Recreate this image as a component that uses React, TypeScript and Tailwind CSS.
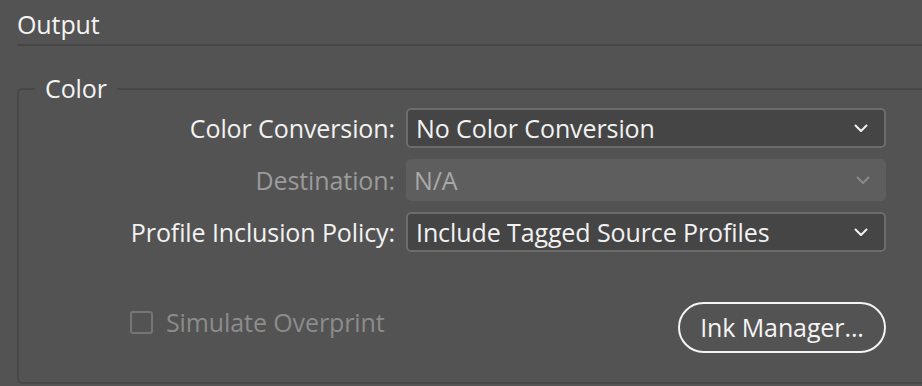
import { ReactNode } from "react";

const font = { fontFamily: '"Open Sans", "Noto Sans", sans-serif' };

function Chevron({ dim }: { dim?: boolean }) {
  return (
    <svg width="14" height="9" viewBox="0 0 14 9" className="shrink-0">
      <path
        d="M1.5 1.5 L7 7 L12.5 1.5"
        fill="none"
        stroke={dim ? "#8a8a8a" : "#f2f2f2"}
        strokeWidth="2"
        strokeLinecap="round"
        strokeLinejoin="round"
      />
    </svg>
  );
}

function Row({
  label,
  value,
  disabled,
}: {
  label: string;
  value: ReactNode;
  disabled?: boolean;
}) {
  return (
    <>
      <div
        className={`text-right pr-[11px] ${disabled ? "text-[#9b9b9b]" : "text-[#f2f2f2]"}`}
      >
        {label}
      </div>
      <div
        className={`h-[40px] rounded-[5px] flex items-center justify-between pl-[8px] pr-[16px] ${
          disabled
            ? "bg-[#5e5e5e] text-[#a8a8a8] h-[42px]"
            : "bg-[#454545] border-2 border-[#6c6c6c] text-[#f2f2f2] pl-[6px]"
        }`}
      >
        <span>{value}</span>
        <Chevron dim={disabled} />
      </div>
    </>
  );
}

export default function App() {
  return (
    <div
      style={font}
      className="w-[922px] h-[386px] overflow-hidden bg-[#535353] text-[25px] font-medium leading-none tracking-[-0.1px]"
    >
      {/* header */}
      <div className="ml-[17px] h-[46px] border-b-2 border-[#474747] flex items-center pt-[4px] text-[#f4f4f4]">
        Output
      </div>

      {/* color group */}
      <fieldset className="ml-[17px] -mr-[10px] mt-[30px] h-[308px] border-2 border-[#474747] rounded-[5px] pl-[0px] pr-[46px]">
        <legend className="ml-[16px] px-[10px] text-[#f4f4f4]">Color</legend>

        <div className="grid grid-cols-[387px_480px] gap-y-[11px] items-center mt-[7px]">
          <Row label="Color Conversion:" value="No Color Conversion" />
          <Row label="Destination:" value="N/A" disabled />
          <Row
            label="Profile Inclusion Policy:"
            value="Include Tagged Source Profiles"
          />
        </div>

        <div className="flex items-start justify-between mt-[50px] pl-[111px] w-[867px]">
          <label className="flex items-center gap-[13px] mt-[8px] text-[#8c8c8c]">
            <span className="w-[23px] h-[23px] rounded-[3px] border-2 border-[#757575]" />
            Simulate Overprint
          </label>
          <button className="w-[208px] h-[51px] rounded-full border-2 border-[#f4f4f4] text-[#f4f4f4]">
            Ink Manager...
          </button>
        </div>
      </fieldset>
    </div>
  );
}
